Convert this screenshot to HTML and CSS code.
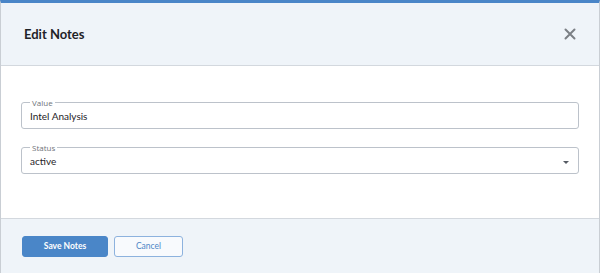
FILE: index.html
```html
<!DOCTYPE html>
<html>
<head>
	<meta charset="utf-8">
	<title>Edit Notes</title>
	<link rel="stylesheet" href="styles.css">
</head>
<body>
	<div class="modal">
		<div class="modalHeader">
			<span class="modalTitle">Edit Notes</span>
			<button class="closeButton" aria-label="Close">
				<svg width="12" height="12" viewBox="0 0 12 12">
					<path d="M1.5 1.5 L10.5 10.5 M10.5 1.5 L1.5 10.5" stroke="#7b7f85" stroke-width="2" stroke-linecap="round"/>
				</svg>
			</button>
		</div>

		<div class="modalBody">
			<fieldset class="field">
				<legend>Value</legend>
				<div class="fieldValue">Intel Analysis</div>
			</fieldset>
			<fieldset class="field">
				<legend>Status</legend>
				<div class="fieldValue">active</div>
				<span class="caret"></span>
			</fieldset>
		</div>

		<div class="modalFooter">
			<button class="btn btnPrimary">Save Notes</button>
			<button class="btn btnOutline">Cancel</button>
		</div>
	</div>
</body>
</html>
```

FILE: styles.css
```css
* {
	box-sizing: border-box;
}

body {
	margin: 0;
	font-family: Lato, "Open Sans", sans-serif;
	background: #fff;
}

.modal {
	width: 600px;
	height: 273px;
	display: flex;
	flex-direction: column;
	border-top: 3px solid #4a86c8;
	border-left: 1px solid #c9ced4;
	border-right: 1px solid #c9ced4;
}

.modalHeader {
	height: 63px;
	display: flex;
	align-items: center;
	justify-content: space-between;
	padding: 0 23px 0 23px;
	background: #eff4f9;
	border-bottom: 1px solid #d3d8de;
}

.modalTitle {
	font-size: 13px;
	font-weight: 700;
	color: #1f2328;
}

.closeButton {
	border: none;
	background: none;
	padding: 0;
	width: 12px;
	height: 12px;
	display: flex;
}

.modalBody {
	flex: 1;
	padding: 32px 20px 0 20px;
	display: flex;
	flex-direction: column;
	gap: 14px;
}

.field {
	position: relative;
	margin: 0;
	height: 31px;
	padding: 0 10px 0 8px;
	border: 1px solid #bcc2ca;
	border-radius: 3px;
}

.field legend {
	padding: 0 2px;
	margin-left: 0;
	font-family: "Open Sans", sans-serif;
	font-size: 8px;
	line-height: 9px;
	color: #6f747a;
}

.fieldValue {
	font-family: Lato, "Open Sans", sans-serif;
	font-size: 10px;
	line-height: 14px;
	color: #1f2328;
	padding-top: 2px;
}

.caret {
	position: absolute;
	right: 9px;
	top: 9px;
	width: 0;
	height: 0;
	border-left: 3px solid transparent;
	border-right: 3px solid transparent;
	border-top: 3px solid #555b63;
}

.modalFooter {
	height: 55px;
	display: flex;
	align-items: center;
	gap: 6px;
	padding: 0 21px;
	background: #eff4f9;
	border-top: 1px solid #d3d8de;
}

.btn {
	height: 21px;
	border-radius: 3px;
	font-family: Lato, "Open Sans", sans-serif;
	font-size: 8.5px;
	padding: 0;
}

.btnPrimary {
	width: 86px;
	background: #4a86c8;
	border: 1px solid #4a86c8;
	color: #fff;
	font-weight: 700;
}

.btnOutline {
	width: 69px;
	background: #f8fafd;
	border: 1px solid #8db2de;
	color: #4f86c6;
}
```
